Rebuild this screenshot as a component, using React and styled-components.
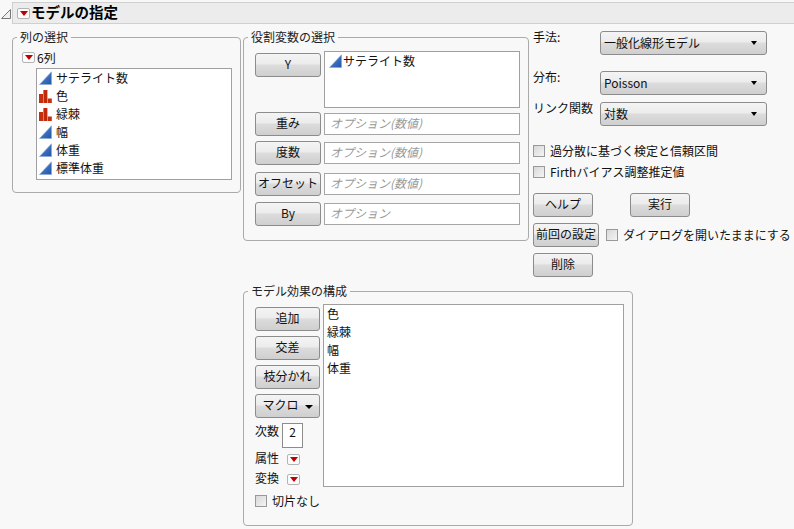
import React from 'react';
import styled, { createGlobalStyle } from 'styled-components';

const Global = createGlobalStyle`
  html, body { margin: 0; padding: 0; background: #f8f8f8; }
  body { font-family: "Noto Sans CJK JP", "Liberation Sans", sans-serif; font-size: 12px; color: #111; }
`;

const Page = styled.div`
  width: 794px; height: 529px; overflow: hidden; box-sizing: border-box;
  padding-top: 2px; background: #f8f8f8;
`;
const TitleRow = styled.div`display: flex; align-items: center; height: 22px;`;
const Disclosure = styled.svg`width: 10px; height: 10px; margin: 2px 1px 0 1px; flex: none;`;
const TitleBar = styled.div`
  flex: 1; height: 22px; box-sizing: border-box; display: flex; align-items: center; gap: 1px;
  padding-left: 4px; background: #ececec; border: 1px solid #d0d0d0; border-right: 0;
`;
const Title = styled.h1`margin: 0 0 2px; font-size: 14.5px; line-height: 18px; font-weight: 700; color: #000;`;
const MenuBtn = styled.span`
  display: inline-flex; align-items: center; justify-content: center; flex: none;
  width: 11px; height: 9px; border: 1px solid #b4b4b4; border-radius: 2px; background: #fbfbfb;
  &::after { content: ""; border-left: 4px solid transparent; border-right: 4px solid transparent; border-top: 5px solid #c00000; }
`;

const Body = styled.div`
  display: grid; grid-template-columns: 229px 286px 1fr; column-gap: 2px; padding: 7px 0 0 12px; align-items: start;
`;
const Group = styled.fieldset`
  margin: 0; padding: 0; box-sizing: border-box; min-width: 0;
  border: 1px solid #aaa; border-radius: 4px; height: ${p => p.$h}px;
`;
const Legend = styled.legend`
  margin-left: 4px; padding: 0 3px; font-size: 12px; line-height: 12px; color: #222; height: 12px;
`;
const ColumnsContent = styled.div`padding: 6px 8px 0 23px;`;
const RoleContent = styled.div`padding: 8px 8px 0 11px;`;
const EffectsRow = styled.div`grid-column: 2 / 4; padding-top: 8px;`;
const EffectsGroup = styled(Group)`width: 390px;`;
const EffectsContent = styled.div`display: flex; gap: 3px; align-items: flex-start; padding: 7px 8px 0 11px;`;

const CountRow = styled.div`display: flex; align-items: center; gap: 2px; height: 17px; margin: 0 0 2px -14px; line-height: 17px;`;
const ListBox = styled.div`
  box-sizing: border-box; background: #fff; border: 1px solid #a0a0a0; flex: none;
  width: ${p => p.$w}px; height: ${p => p.$h}px; padding: ${p => p.$pad || '0 2px'};
`;
const Rows = styled.div`display: flex; flex-direction: column;`;
const ListRow = styled.div`display: flex; align-items: center; gap: ${p => p.$gap ?? 4}px; height: 18px; line-height: 18px; white-space: nowrap;`;
const Icon = styled.svg`width: 13px; height: 14px; flex: none;`;

const Btn = styled.button`
  box-sizing: border-box; width: ${p => p.$w || 66}px; height: 24px; padding: 0 0 2px; flex: none;
  font: inherit; font-size: 12px; line-height: 20px; color: #111; white-space: nowrap;
  border: 1px solid #8c8c8c; border-radius: 3px;
  background: linear-gradient(#f4f4f4 0%, #ececec 45%, #dcdcdc 50%, #cfcfcf 100%);
`;
const RoleRow = styled.div`display: grid; grid-template-columns: 66px 196px; column-gap: 3px; align-items: start; margin-bottom: ${p => p.$mb ?? 5}px;`;
const YBtn = styled(Btn)`margin-top: 2px;`;
const Option = styled.div`
  box-sizing: border-box; height: 22px; margin-top: 1px; padding-left: 5px; line-height: 18px; background: #fff;
  border: 1px solid #a6a6a6; color: #999; font-style: italic;
`;

const Right = styled.div`padding-left: 2px; display: flex; flex-direction: column;`;
const FieldRow = styled.div`display: grid; grid-template-columns: 67px 167px; align-items: start; margin-bottom: ${p => p.$mb}px; white-space: nowrap;`;
const FieldLabel = styled.label`line-height: 12px;`;
const Select = styled.div`
  box-sizing: border-box; height: 24px; display: flex; align-items: center; justify-content: space-between;
  padding: 0 9px 2px 3px; border: 1px solid #8c8c8c; border-radius: 3px; color: #111;
  background: linear-gradient(#f4f4f4 0%, #ececec 45%, #dcdcdc 50%, #cfcfcf 100%);
  &::after { content: ""; border-left: 3px solid transparent; border-right: 3px solid transparent; border-top: 4px solid #000; margin-top: 2px; }
`;
const Check = styled.span`
  flex: none; box-sizing: border-box; width: 12px; height: 12px; border: 1px solid #999;
  background: linear-gradient(135deg, #d8d8d8, #f4f4f4);
`;
const CheckRow = styled.label`display: flex; align-items: center; gap: 5px; height: 18px; line-height: 18px; white-space: nowrap; margin-bottom: ${p => p.$mb ?? 0}px;`;
const ButtonRow = styled.div`display: flex; align-items: center; margin-bottom: ${p => p.$mb ?? 6}px; gap: ${p => p.$gap ?? 0}px;`;

const EffectsSide = styled.div`display: flex; flex-direction: column; width: 65px; flex: none; padding-top: 3px;`;
const EffectBtn = styled(Btn)`margin-bottom: 5px; width: 65px;`;
const MacroArrow = styled.span`
  display: inline-block; margin-left: 6px; vertical-align: 1px;
  border-left: 4px solid transparent; border-right: 4px solid transparent; border-top: 4px solid #000;
`;
const DegreeRow = styled.div`display: flex; align-items: flex-start; gap: 3px; height: 26px; line-height: 16px;`;
const DegreeInput = styled.div`
  box-sizing: border-box; width: 21px; height: 25px; background: #fff; border: 1px solid #8c8c8c;
  text-align: center; line-height: 16px;
`;
const AttrRow = styled.div`display: flex; align-items: center; gap: 8px; height: 20px; line-height: 18px; white-space: nowrap;`;
const AttrLabel = styled.span`margin-bottom: 2px;`;
const EffectsCheck = styled(CheckRow)`margin-top: 3px; white-space: nowrap;`;

const Continuous = () => (
  <Icon viewBox="0 0 13 14">
    <defs>
      <linearGradient id="cont" x1="0" y1="0" x2="1" y2="1">
        <stop offset="0" stopColor="#5c8ed6" /><stop offset="1" stopColor="#1f55a8" />
      </linearGradient>
    </defs>
    <polygon points="0.5,13.5 12.5,13.5 12.5,0.8" fill="url(#cont)" stroke="#8aa7d3" strokeWidth="0.7" />
  </Icon>
);
const Nominal = () => (
  <Icon viewBox="0 0 13 14">
    <rect x="0" y="5" width="4" height="9" fill="#c4300f" />
    <rect x="4.4" y="1" width="4" height="13" fill="#bf2a0a" />
    <rect x="8.8" y="9.5" width="4" height="4.5" fill="#c4300f" />
  </Icon>
);

const columns = [
  ['サテライト数', Continuous], ['色', Nominal], ['緑棘', Nominal],
  ['幅', Continuous], ['体重', Continuous], ['標準体重', Continuous],
];
const optional = [
  ['重み', 'オプション(数値)', 5], ['度数', 'オプション(数値)', 7],
  ['オフセット', 'オプション(数値)', 6], ['By', 'オプション', 0],
];

export default function App() {
  return (
    <Page>
      <Global />
      <TitleRow>
        <Disclosure viewBox="0 0 10 10"><polygon points="0.5,9.5 9.5,9.5 9.5,0.5" fill="#f0f0f0" stroke="#777" /></Disclosure>
        <TitleBar><MenuBtn /><Title>モデルの指定</Title></TitleBar>
      </TitleRow>
      <Body>
        <Group $h={162}>
          <Legend>列の選択</Legend>
          <ColumnsContent>
            <CountRow><MenuBtn />6列</CountRow>
            <ListBox $w={196} $h={112} $pad="0 3px 0 2px">
              <Rows>
                {columns.map(([name, I]) => <ListRow key={name}><I />{name}</ListRow>)}
              </Rows>
            </ListBox>
          </ColumnsContent>
        </Group>
        <Group $h={210}>
          <Legend>役割変数の選択</Legend>
          <RoleContent>
            <RoleRow $mb={4}>
              <YBtn>Y</YBtn>
              <ListBox $w={196} $h={57} $pad="0 3px 0 4px">
                <ListRow $gap={1}><Continuous />サテライト数</ListRow>
              </ListBox>
            </RoleRow>
            {optional.map(([name, hint, mb]) => (
              <RoleRow key={name} $mb={mb}><Btn>{name}</Btn><Option>{hint}</Option></RoleRow>
            ))}
          </RoleContent>
        </Group>
        <Right>
          <FieldRow $mb={16}><FieldLabel>手法:</FieldLabel><Select>一般化線形モデル</Select></FieldRow>
          <FieldRow $mb={7}><FieldLabel>分布:</FieldLabel><Select>Poisson</Select></FieldRow>
          <FieldRow $mb={16}><FieldLabel>リンク関数</FieldLabel><Select>対数</Select></FieldRow>
          <CheckRow $mb={3}><Check />過分散に基づく検定と信頼区間</CheckRow>
          <CheckRow $mb={12}><Check />Firthバイアス調整推定値</CheckRow>
          <ButtonRow $gap={37}><Btn $w={60}>ヘルプ</Btn><Btn $w={60}>実行</Btn></ButtonRow>
          <ButtonRow $gap={7}><Btn $w={66}>前回の設定</Btn><CheckRow><Check />ダイアログを開いたままにする</CheckRow></ButtonRow>
          <ButtonRow $mb={0}><Btn $w={60}>削除</Btn></ButtonRow>
        </Right>
        <EffectsRow>
          <EffectsGroup $h={241}>
            <Legend>モデル効果の構成</Legend>
            <EffectsContent>
              <EffectsSide>
                <EffectBtn>追加</EffectBtn>
                <EffectBtn>交差</EffectBtn>
                <EffectBtn>枝分かれ</EffectBtn>
                <EffectBtn>マクロ<MacroArrow /></EffectBtn>
                <DegreeRow>次数<DegreeInput>2</DegreeInput></DegreeRow>
                <AttrRow><AttrLabel>属性</AttrLabel><MenuBtn /></AttrRow>
                <AttrRow><AttrLabel>変換</AttrLabel><MenuBtn /></AttrRow>
                <EffectsCheck><Check />切片なし</EffectsCheck>
              </EffectsSide>
              <ListBox $w={301} $h={183} $pad="0 3px">
                <Rows>
                  {['色', '緑棘', '幅', '体重'].map(t => <ListRow key={t}>{t}</ListRow>)}
                </Rows>
              </ListBox>
            </EffectsContent>
          </EffectsGroup>
        </EffectsRow>
      </Body>
    </Page>
  );
}
